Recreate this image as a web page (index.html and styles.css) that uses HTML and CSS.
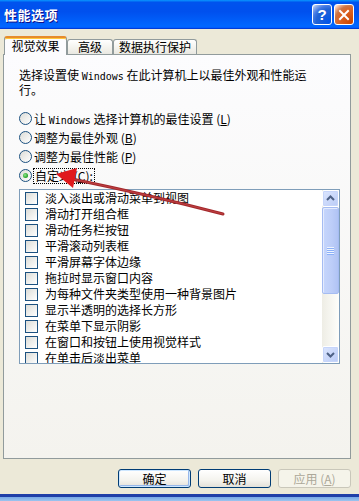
FILE: index.html
```html
<!DOCTYPE html>
<html lang="zh-CN">
<head>
<meta charset="utf-8">
<title>性能选项</title>
<link rel="stylesheet" href="styles.css">
</head>
<body>
<div class="window">
  <div class="titlebar">
    <span class="title">性能选项</span>
    <div class="tb-buttons">
      <div class="tb-btn help">?</div>
      <div class="tb-btn close">
        <svg width="12" height="12" viewBox="0 0 12 12"><path d="M2 2 L10 10 M10 2 L2 10" stroke="#fff" stroke-width="2" stroke-linecap="square"/></svg>
      </div>
    </div>
  </div>
  <div class="body">
    <div class="tabs">
      <div class="tab active t1">视觉效果</div>
      <div class="tab t2">高级</div>
      <div class="tab t3">数据执行保护</div>
    </div>
    <div class="panel">
      <div class="desc">
        <div class="line">选择设置使 <span class="lat">Windows</span> 在此计算机上以最佳外观和性能运</div>
        <div class="line">行。</div>
      </div>
      <div class="radios">
        <div class="radio"><span class="rc"></span><span>让 <span class="lat">Windows</span> 选择计算机的最佳设置 (<u>L</u>)</span></div>
        <div class="radio"><span class="rc"></span><span>调整为最佳外观 (<u>B</u>)</span></div>
        <div class="radio"><span class="rc"></span><span>调整为最佳性能 (<u>P</u>)</span></div>
        <div class="radio"><span class="rc on"></span><span class="focus">自定义 (<u>C</u>):</span></div>
      </div>
      <div class="listbox">
        <div class="items">
          <div class="item"><span class="check"></span><span>淡入淡出或滑动菜单到视图</span></div>
          <div class="item"><span class="check"></span><span>滑动打开组合框</span></div>
          <div class="item"><span class="check"></span><span>滑动任务栏按钮</span></div>
          <div class="item"><span class="check"></span><span>平滑滚动列表框</span></div>
          <div class="item"><span class="check"></span><span>平滑屏幕字体边缘</span></div>
          <div class="item"><span class="check"></span><span>拖拉时显示窗口内容</span></div>
          <div class="item"><span class="check"></span><span>为每种文件夹类型使用一种背景图片</span></div>
          <div class="item"><span class="check"></span><span>显示半透明的选择长方形</span></div>
          <div class="item"><span class="check"></span><span>在菜单下显示阴影</span></div>
          <div class="item"><span class="check"></span><span>在窗口和按钮上使用视觉样式</span></div>
          <div class="item"><span class="check"></span><span>在单击后淡出菜单</span></div>
        </div>
        <div class="scrollbar">
          <div class="sb-btn">
            <svg width="15" height="15" viewBox="0 0 15 15"><path d="M4 9 L7.5 5.5 L11 9" fill="none" stroke="#4D6185" stroke-width="2"/></svg>
          </div>
          <div class="thumb"><span class="grip"></span></div>
          <div class="track"></div>
          <div class="sb-btn">
            <svg width="15" height="15" viewBox="0 0 15 15"><path d="M4 6 L7.5 9.5 L11 6" fill="none" stroke="#4D6185" stroke-width="2"/></svg>
          </div>
        </div>
      </div>
    </div>
    <div class="buttons">
      <div class="btn default">确定</div>
      <div class="btn">取消</div>
      <div class="btn disabled">应用 (<u>A</u>)</div>
    </div>
  </div>
  <div class="frame-bottom"></div>
  <svg class="arrow" width="359" height="501" viewBox="0 0 359 501">
    <path d="M72 179 Q150 195 223 214" fill="none" stroke="#A3282B" stroke-width="3" stroke-linecap="round"/>
    <path d="M72 179 Q150 195 223 214" fill="none" stroke="#D9575A" stroke-width="1" stroke-linecap="round" opacity="0.5"/>
    <polygon points="56,174 77,168 73,188" fill="#E0191C"/>
  </svg>
</div>
</body>
</html>
```

FILE: styles.css
```css
* {
  box-sizing: border-box;
  margin: 0;
  padding: 0;
}

html, body {
  width: 359px;
  height: 501px;
  overflow: hidden;
}

body {
  font-family: "Noto Sans CJK SC", "Noto Sans", sans-serif;
  font-size: 12px;
  color: #000;
  background: #ECE9D8;
}

.window {
  position: relative;
  width: 359px;
  height: 501px;
  display: flex;
  flex-direction: column;
}

.titlebar {
  flex: none;
  height: 29px;
  display: flex;
  align-items: center;
  justify-content: space-between;
  padding: 0 5px 0 4px;
  background: linear-gradient(180deg, #0997ff, #0053ee 8%, #0050ee 40%, #0066ff 88%, #0066ff 93%, #005bff 95%, #003dd7 96%, #003dd7);
}

.title {
  color: #fff;
  font-weight: bold;
  font-size: 13px;
  letter-spacing: 0.5px;
  text-shadow: 1px 1px #0f1089;
  line-height: 1;
}

.tb-buttons {
  display: flex;
  gap: 2px;
}

.tb-btn {
  width: 20px;
  height: 21px;
  border: 1px solid #fff;
  border-radius: 3px;
  display: flex;
  align-items: center;
  justify-content: center;
  color: #fff;
  font-family: "Liberation Sans", sans-serif;
  font-weight: bold;
  font-size: 15px;
}

.help {
  background: radial-gradient(circle at 90% 90%, #0054e9 0, #2263d5 55%, #4479e4 70%, #a3bbec 90%, #fff 100%);
}

.close {
  background: radial-gradient(circle at 90% 90%, #cc4600 0, #dc6527 55%, #cd7546 70%, #ffccb2 90%, #fff 100%);
}

.body {
  flex: none;
  height: 465px;
  padding: 7px 8px 6px 3px;
  display: flex;
  flex-direction: column;
}

.tabs {
  height: 18px;
  display: flex;
  align-items: flex-end;
  padding-left: 1px;
}

.tab {
  height: 15px;
  border: 1px solid #919B9C;
  border-bottom: none;
  border-radius: 3px 3px 0 0;
  background: linear-gradient(#ffffff, #F3F2EC 60%, #E9E8E2);
  display: flex;
  align-items: center;
  justify-content: center;
  line-height: 1;
}

.tab.active {
  height: 19px;
  margin-bottom: -1px;
  position: relative;
  z-index: 1;
  background: #FCFCFE;
  border-top: 2px solid #E68B2C;
  box-shadow: inset 0 1px #FFC83C;
  padding-bottom: 2px;
}

.t1 { width: 63px; }
.t2 { width: 46px; }
.t3 { width: 84px; }

.panel {
  height: 405px;
  width: 348px;
  border: 1px solid #919B9C;
  background: linear-gradient(#FCFCFE, #F4F3EE);
  padding: 12px 10px 0 15px;
}

.desc .line {
  height: 15px;
  line-height: 15px;
  white-space: nowrap;
}

.lat {
  font-family: "DejaVu Sans Mono", "Liberation Mono", monospace;
  font-size: 10px;
  line-height: 1;
}

.radios {
  margin-top: 12px;
}

.radio {
  height: 19px;
  display: flex;
  align-items: center;
  gap: 2px;
  white-space: nowrap;
}

.rc {
  width: 13px;
  height: 13px;
  border: 1px solid #1C5180;
  border-radius: 50%;
  background: linear-gradient(135deg, #DCDCD7, #ffffff);
  flex: none;
  display: flex;
  align-items: center;
  justify-content: center;
}

.rc.on::after {
  content: "";
  width: 5px;
  height: 5px;
  border-radius: 50%;
  background: radial-gradient(circle at 40% 40%, #8FE58F, #21A121 70%);
}

.focus {
  outline: 1px dotted #000;
  padding: 0 1px;
  line-height: 14px;
}

u {
  text-decoration: underline;
  text-underline-offset: 1px;
}

.listbox {
  margin-top: 4px;
  height: 175px;
  border: 1px solid #7F9DB9;
  background: #fff;
  display: flex;
}

.items {
  flex: 1;
  overflow: hidden;
  padding-left: 5px;
}

.item {
  height: 16px;
  display: flex;
  align-items: center;
  gap: 7px;
  white-space: nowrap;
  line-height: 1;
}

.check {
  width: 13px;
  height: 13px;
  border: 1px solid #1C5180;
  background: linear-gradient(135deg, #DCDCD7, #ffffff);
  flex: none;
}

.scrollbar {
  width: 17px;
  flex: none;
  display: flex;
  flex-direction: column;
  background: linear-gradient(90deg, #EEEDE5, #FEFEFB);
}

.sb-btn {
  height: 17px;
  flex: none;
  border: 1px solid #fff;
  border-radius: 2px;
  background: linear-gradient(135deg, #DCE6FE, #BACBF6);
  box-shadow: inset 0 0 0 1px #C6D5FA;
  display: flex;
  align-items: center;
  justify-content: center;
}

.thumb {
  height: 87px;
  flex: none;
  border: 1px solid #A5BCF2;
  border-radius: 2px;
  background: linear-gradient(90deg, #C6D6FC, #BCCDF8 60%, #B0C3F4);
  box-shadow: inset 1px 1px #E4EBFE;
  display: flex;
  align-items: center;
  justify-content: center;
}

.grip {
  width: 7px;
  height: 8px;
  background: repeating-linear-gradient(180deg, #EEF4FE 0 1px, #8CB0F8 1px 2px);
}

.track {
  flex: 1;
}

.buttons {
  margin-top: 10px;
  display: flex;
  justify-content: flex-end;
  gap: 7px;
}

.btn {
  width: 73px;
  height: 19px;
  border: 1px solid #003C74;
  border-radius: 3px;
  background: linear-gradient(#ffffff, #F4F3EE 60%, #E3E1D9);
  display: flex;
  align-items: center;
  justify-content: center;
  line-height: 1;
}

.btn.default {
  box-shadow: inset 0 0 0 1px #CEE7FF, inset -1px -1px 0 1px #98B8EA;
}

.btn.disabled {
  border-color: #C9C7BA;
  color: #ACA899;
  background: #F5F4EA;
}

.frame-bottom {
  flex: 1;
  background: linear-gradient(#1F3FA8 0 3px, #76A8E6 3px, #9CC4EE);
}

.arrow {
  position: absolute;
  left: 0;
  top: 0;
  pointer-events: none;
}
```
